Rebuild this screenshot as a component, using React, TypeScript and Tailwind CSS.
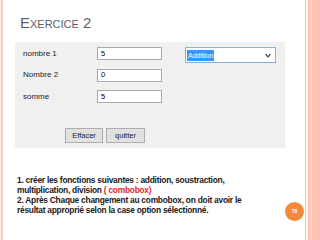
export default function App() {
  return (
    <div className="flex h-[240px] w-[320px] overflow-hidden bg-white font-['Liberation_Sans',Arial,sans-serif]">
      <div className="w-[1px] bg-[#fdeee8]" />
      <div className="w-[2px] bg-[#fbcfc0]" />
      <div className="relative flex flex-1 flex-col">
        <div className="pl-[17px] pt-[14px] text-[15px] leading-[18px] text-[#5f5f66] [font-variant:small-caps]">
          Exercice 2
        </div>
        <Dialog />
        <div className="mt-[27px] pl-[14px] text-[8.4px] font-bold leading-[10px] tracking-[-0.25px] text-[#1a1a1a]">
          <div className="whitespace-nowrap">1. créer les fonctions suivantes : addition, soustraction,</div>
          <div className="whitespace-nowrap">
            multiplication, division <span className="text-[#e8262b]">( combobox)</span>
          </div>
          <div className="whitespace-nowrap">2. Après Chaque changement au combobox, on doit avoir le</div>
          <div className="whitespace-nowrap">résultat approprié selon la case option sélectionné.</div>
        </div>
        <div className="absolute left-[282px] top-[202px] flex h-[19px] w-[19px] items-center justify-center rounded-full bg-[#f5883a] text-[5px] font-bold text-white">
          78
        </div>
      </div>
      <div className="w-[1px] bg-[#f8c2b0]" />
      <div className="w-[2px] bg-[#fff4f0]" />
      <div className="flex w-[12px]">
        <div className="w-[3px] bg-[#fdc6b3]" />
        <div className="w-[1px] bg-[#fde0d5]" />
        <div className="flex-1 bg-[#fcc4b0]" />
      </div>
    </div>
  );
}

function Field({ label, value }: { label: string; value: string }) {
  return (
    <div className="flex h-[13px] items-center">
      <span className="w-[74px] text-[8px] text-[#222]">{label}</span>
      <div className="flex h-[13px] w-[65px] items-center border border-[#a9a9a9] bg-white pl-[3px] text-[7.5px] text-black">
        {value}
      </div>
    </div>
  );
}

function Dialog() {
  return (
    <div className="ml-[12px] mt-[10px] flex h-[106px] w-[270px] bg-[#f0f0f0] pl-[8px] pt-[5px]">
      <div className="flex flex-col">
        <div className="flex flex-col gap-[8.5px]">
          <Field label="nombre 1" value="5" />
          <Field label="Nombre 2" value="0" />
          <Field label="somme" value="5" />
        </div>
        <div className="ml-[42px] mt-[25px] flex gap-[3px]">
          <button className="h-[15px] w-[38px] border border-[#adadad] bg-[#e1e1e1] text-[7.5px] leading-none text-[#222]">
            Effacer
          </button>
          <button className="h-[15px] w-[39px] border border-[#adadad] bg-[#e1e1e1] text-[7.5px] leading-none text-[#222]">
            quitter
          </button>
        </div>
      </div>
      <div className="ml-[23px] flex h-[16px] w-[91px] items-center border border-[#7eb4ea] bg-white pl-[1px] pr-[4px]">
        <span className="bg-[#3399ff] px-[1px] text-[7px] leading-[11px] text-white">Addition</span>
        <svg className="ml-auto" width="6" height="5" viewBox="0 0 6 5">
          <path d="M0.5 1 L3 3.8 L5.5 1" fill="none" stroke="#444" strokeWidth="1.2" />
        </svg>
      </div>
    </div>
  );
}
